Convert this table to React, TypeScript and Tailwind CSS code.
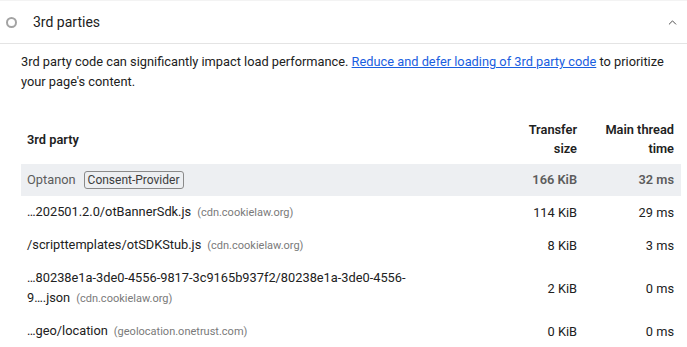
import { ChevronUp } from "lucide-react";

type Row = {
  url: string;
  host: string;
  size: string;
  time: string;
};

const rows: Row[] = [
  { url: "…202501.2.0/otBannerSdk.js", host: "(cdn.cookielaw.org)", size: "114 KiB", time: "29 ms" },
  { url: "/scripttemplates/otSDKStub.js", host: "(cdn.cookielaw.org)", size: "8 KiB", time: "3 ms" },
  {
    url: "…80238e1a-3de0-4556-9817-3c9165b937f2/80238e1a-3de0-4556-9….json",
    host: "(cdn.cookielaw.org)",
    size: "2 KiB",
    time: "0 ms",
  },
  { url: "…geo/location", host: "(geolocation.onetrust.com)", size: "0 KiB", time: "0 ms" },
];

export default function App() {
  return (
    <div className="w-[687px] h-[347px] bg-white overflow-hidden text-[#212121] font-['Roboto',sans-serif]">
      {/* audit header */}
      <div className="h-[44px] flex items-center border-t border-b border-t-[#f3f3f3] border-b-[#e4e4e4]">
        <span className="ml-[6px] w-[11px] h-[11px] rounded-full border-2 border-[#a3a3a3]" />
        <span className="ml-[16px] text-[14px] leading-5">3rd parties</span>
        <ChevronUp className="ml-auto mr-[8px] w-[13px] h-[13px] text-[#4a4a4a]" strokeWidth={1.8} />
      </div>

      <div className="pl-[21px] pr-[6px]">
        <p className="mt-[8px] text-[12.8px] leading-5">
          3rd party code can significantly impact load performance.{" "}
          <a href="#" className="text-[#1a5ee0] underline">
            Reduce and defer loading of 3rd party code
          </a>{" "}
          to prioritize your page's content.
        </p>

        <div className="mt-[22px] text-[12.8px]">
          {/* table head */}
          <div className="flex items-center py-[6px] font-semibold leading-[19px]">
            <div className="flex-1 pl-[6px]">3rd party</div>
            <div className="w-[90px] pr-[7px] text-right">
              Transfer
              <br />
              size
            </div>
            <div className="w-[97px] pr-[7px] text-right">
              Main thread
              <br />
              time
            </div>
          </div>

          {/* entity row */}
          <div className="flex items-center h-[32px] bg-[#edeff2] text-[#5c5c5c]">
            <div className="flex-1 pl-[6px] flex items-center gap-[8px]">
              <span>Optanon</span>
              <span className="px-[3px] leading-[16px] text-[12px] text-[#3c3c3c] border border-[#8a8a8a] rounded-[3px]">
                Consent-Provider
              </span>
            </div>
            <div className="w-[90px] pr-[7px] text-right font-semibold">166 KiB</div>
            <div className="w-[97px] pr-[7px] text-right font-semibold">32 ms</div>
          </div>

          {rows.map((r) => (
            <div key={r.url} className="flex items-center py-[6px] leading-5">
              <div className="flex-1 pl-[6px]">
                <div className="max-w-[420px]">
                  <span>{r.url}</span>
                  <span className="ml-[6px] text-[11px] text-[#7a7a7a]">{r.host}</span>
                </div>
              </div>
              <div className="w-[90px] pr-[7px] text-right">{r.size}</div>
              <div className="w-[97px] pr-[7px] text-right">{r.time}</div>
            </div>
          ))}
        </div>
      </div>
    </div>
  );
}
